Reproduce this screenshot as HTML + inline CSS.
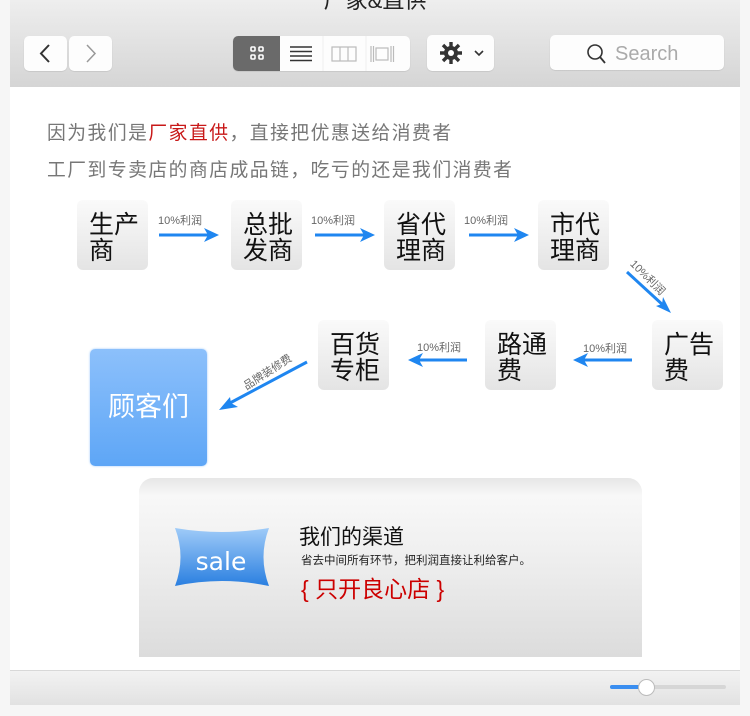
<!DOCTYPE html>
<html><head><meta charset="utf-8"><style>
*{margin:0;padding:0;box-sizing:border-box}
body{width:750px;height:716px;background:#f6f6f6;position:relative;overflow:hidden;font-family:"Liberation Sans","Noto Sans CJK SC",sans-serif}
.a{position:absolute}
.win{left:10px;top:0;width:730px;height:705px;background:#fff;}
.tb{left:10px;top:0;width:730px;height:87px;background:linear-gradient(#eeeeee,#d5d5d5)}
.btn{background:#fdfdfd;border-radius:5px;box-shadow:0 0.5px 1px rgba(0,0,0,.15)}
.box{width:71px;height:70px;border-radius:6px;background:linear-gradient(#fafafa,#e4e4e4);font-size:25px;line-height:26px;color:#111;padding:12px 0 0 12px;letter-spacing:0}
.lbl{font-size:11px;color:#666}
.t{font-size:18.8px;color:#777;left:47px;letter-spacing:1.5px}
</style></head><body>
<div class="a win"></div>
<div class="a tb"></div>
<div class="a" style="left:0;width:750px;top:-17px;text-align:center;font-size:22px;color:#222">厂家&amp;直供</div>
<div class="a btn" style="left:24px;top:36px;width:43px;height:35px"></div>
<div class="a btn" style="left:69px;top:36px;width:43px;height:35px"></div>
<svg class="a" style="left:24px;top:36px" width="90" height="35"><path d="M25 9 L17 17.5 L25 26" fill="none" stroke="#333" stroke-width="2"/><path d="M63 9 L71 17.5 L63 26" fill="none" stroke="#999" stroke-width="1.5"/></svg>
<div class="a btn" style="left:233px;top:36px;width:177px;height:35px"></div>
<div class="a" style="left:233px;top:36px;width:47px;height:35px;background:#6a6a6a;border-radius:5px 0 0 5px"></div>
<svg class="a" style="left:233px;top:36px" width="177" height="35">
<g fill="none" stroke="#fff" stroke-width="1.6"><rect x="18" y="11" width="4" height="4" rx="1"/><rect x="26" y="11" width="4" height="4" rx="1"/><rect x="18" y="19" width="4" height="4" rx="1"/><rect x="26" y="19" width="4" height="4" rx="1"/></g>
<g stroke="#333" stroke-width="1.5"><line x1="57" y1="11" x2="79" y2="11"/><line x1="57" y1="15.5" x2="79" y2="15.5"/><line x1="57" y1="20" x2="79" y2="20"/><line x1="57" y1="24.5" x2="79" y2="24.5"/></g>
<g fill="none" stroke="#bbb" stroke-width="1.2"><rect x="99" y="11" width="24" height="14"/><line x1="107" y1="11" x2="107" y2="25"/><line x1="115" y1="11" x2="115" y2="25"/><rect x="143" y="12" width="12" height="12"/><line x1="138" y1="10" x2="138" y2="26"/><line x1="140.5" y1="10" x2="140.5" y2="26"/><line x1="158" y1="10" x2="158" y2="26"/><line x1="160.5" y1="10" x2="160.5" y2="26"/></g>
<line x1="90" y1="0" x2="90" y2="35" stroke="#eee"/><line x1="133" y1="0" x2="133" y2="35" stroke="#eee"/></svg>
<div class="a btn" style="left:427px;top:35px;width:67px;height:36px"></div>
<svg class="a" style="left:427px;top:35px" width="67" height="36"><g transform="translate(24,18)" fill="#333"><circle r="7"/><g stroke="#333" stroke-width="3.4"><line x1="0" y1="-11" x2="0" y2="11"/><line x1="-11" y1="0" x2="11" y2="0"/><line x1="-8" y1="-8" x2="8" y2="8"/><line x1="-8" y1="8" x2="8" y2="-8"/></g><circle r="3" fill="#fff"/></g><path d="M48 16 L52 20 L56 16" fill="none" stroke="#333" stroke-width="1.6"/></svg>
<div class="a btn" style="left:550px;top:35px;width:174px;height:35px"></div>
<svg class="a" style="left:585px;top:43px" width="22" height="22"><circle cx="10" cy="9" r="7" fill="none" stroke="#333" stroke-width="1.6"/><line x1="15" y1="14" x2="20" y2="20" stroke="#333" stroke-width="1.8"/></svg>
<div class="a" style="left:615px;top:43px;font-size:20px;color:#aaa">Search</div>

<div class="a t" style="top:118px">因为我们是<span style="color:#c81818">厂家直供</span>，直接把优惠送给消费者</div>
<div class="a t" style="top:155px">工厂到专卖店的商店成品链，吃亏的还是我们消费者</div>

<div class="a box" style="left:77px;top:200px">生产<br>商</div>
<div class="a box" style="left:231px;top:200px">总批<br>发商</div>
<div class="a box" style="left:384px;top:200px">省代<br>理商</div>
<div class="a box" style="left:538px;top:200px">市代<br>理商</div>
<div class="a box" style="left:652px;top:320px">广告<br>费</div>
<div class="a box" style="left:485px;top:320px">路通<br>费</div>
<div class="a box" style="left:318px;top:320px">百货<br>专柜</div>
<div class="a" style="left:90px;top:349px;width:117px;height:117px;border-radius:5px;background:linear-gradient(#8cc0fb,#5ea6f6);color:#fff;font-size:27px;text-align:center;line-height:117px;box-shadow:0 0 2px #9cc8fa">顾客们</div>

<div class="a lbl" style="left:158px;top:212px">10%利润</div>
<div class="a lbl" style="left:311px;top:212px">10%利润</div>
<div class="a lbl" style="left:464px;top:212px">10%利润</div>
<div class="a lbl" style="left:417px;top:339px">10%利润</div>
<div class="a lbl" style="left:583px;top:340px">10%利润</div>
<div class="a lbl" style="left:638px;top:256px;transform:rotate(45deg);transform-origin:left top">10%利润</div>
<div class="a lbl" style="left:240px;top:380px;transform:rotate(-33deg);transform-origin:left top">品牌装修费</div>
<svg class="a" style="left:0;top:0" width="750" height="716"><g fill="#1f86f0" stroke="#1f86f0" stroke-width="3">
<line x1="159" y1="235" x2="208" y2="235"/><path d="M219 235 L204 228 L208 235 L204 242Z" stroke="none"/>
<line x1="315" y1="235" x2="364" y2="235"/><path d="M375 235 L360 228 L364 235 L360 242Z" stroke="none"/>
<line x1="469" y1="235" x2="518" y2="235"/><path d="M529 235 L514 228 L518 235 L514 242Z" stroke="none"/>
<line x1="627" y1="272" x2="664" y2="306"/><path d="M671 313 L656 306 L662 304 L663 297Z" stroke="none"/>
<line x1="632" y1="360" x2="584" y2="360"/><path d="M573 360 L588 353 L584 360 L588 367Z" stroke="none"/>
<line x1="467" y1="360" x2="419" y2="360"/><path d="M408 360 L423 353 L419 360 L423 367Z" stroke="none"/>
<line x1="307" y1="362" x2="230" y2="403"/><path d="M219 410 L230 397 L231 403 L238 407Z" stroke="none"/>
</g></svg>

<div class="a" style="left:139px;top:478px;width:503px;height:179px;border-radius:14px 14px 0 0;background:linear-gradient(#e6e6e6 0,#f8f8f8 10%,#f0f0f0 40%,#dcdcdc 100%)"></div>
<svg class="a" style="left:174px;top:526px" width="96" height="62"><defs><linearGradient id="g" x1="0" y1="0" x2="0" y2="1"><stop offset="0" stop-color="#9fcbf8"/><stop offset="1" stop-color="#2a7fe0"/></linearGradient></defs><path d="M1 2 Q48 10 95 2 Q84 31 95 60 Q48 50 1 60 Q12 31 1 2Z" fill="url(#g)"/><text x="47" y="44" text-anchor="middle" fill="#fff" font-size="25" font-family="DejaVu Sans,sans-serif">sale</text></svg>
<div class="a" style="left:299px;top:521px;font-size:21px;color:#111">我们的渠道</div>
<div class="a" style="left:301px;top:552px;font-size:11.5px;color:#222">省去中间所有环节，把利润直接让利给客户。</div>
<div class="a" style="left:301px;top:570px;font-size:23px;color:#c00">{ 只开良心店 }</div>

<div class="a" style="left:10px;top:670px;width:730px;height:35px;background:linear-gradient(#f2f2f2,#e2e2e2);border-top:1px solid #d8d8d8"></div>
<div class="a" style="left:610px;top:685px;width:116px;height:4px;border-radius:2px;background:#d6d6d6"></div>
<div class="a" style="left:610px;top:685px;width:36px;height:4px;border-radius:2px;background:#3a8ef0"></div>
<div class="a" style="left:638px;top:679px;width:17px;height:17px;border-radius:50%;background:#fff;border:1px solid #bbb"></div>
</body></html>
